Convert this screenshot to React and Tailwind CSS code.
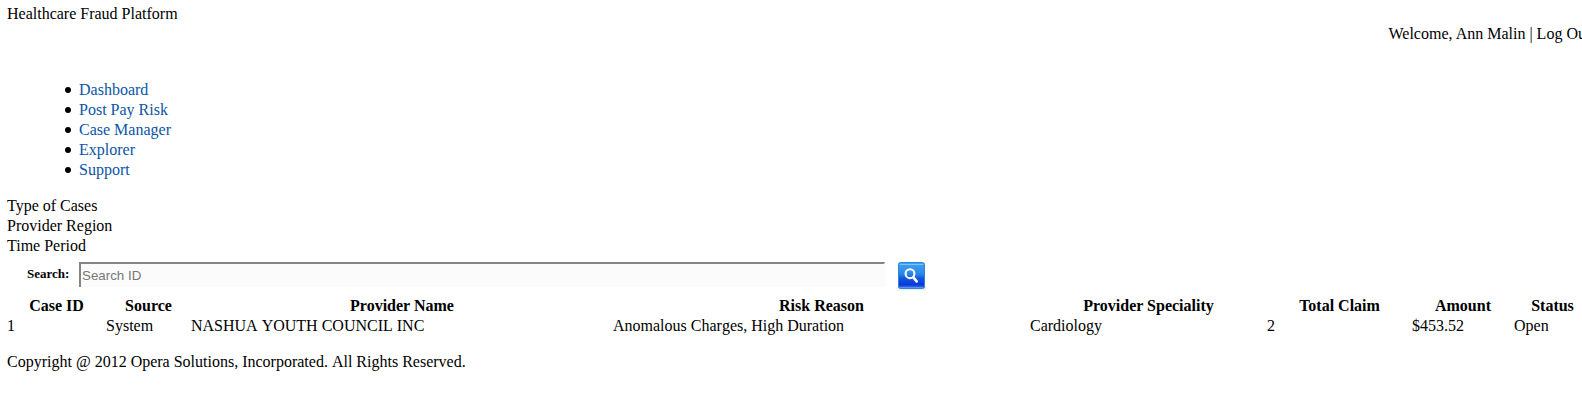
const links = ["Dashboard", "Post Pay Risk", "Case Manager", "Explorer", "Support"];
const filters = ["Type of Cases", "Provider Region", "Time Period"];
const columns = [
  "Case ID",
  "Source",
  "Provider Name",
  "Risk Reason",
  "Provider Speciality",
  "Total Claim",
  "Amount",
  "Status",
];
const cases = [
  ["1", "System", "NASHUA YOUTH COUNCIL INC", "Anomalous Charges, High Duration", "Cardiology", "2", "$453.52", "Open"],
];
const grid = "grid grid-cols-[99px_85px_422px_417px_237px_145px_102px_77px]";

function SearchIcon() {
  return (
    <svg width="31" height="30" viewBox="0 0 31 30" className="block">
      <defs>
        <linearGradient id="face" x1="0" y1="0" x2="0" y2="1">
          <stop offset="0" stopColor="#3fa4f2" />
          <stop offset="0.45" stopColor="#2a86ea" />
          <stop offset="0.6" stopColor="#1258dd" />
          <stop offset="0.85" stopColor="#0b36dc" />
          <stop offset="1" stopColor="#3f80e8" />
        </linearGradient>
      </defs>
      <rect x="0.5" y="24" width="30" height="4.5" rx="2" fill="#ededed" />
      <rect x="2.5" y="0.5" width="26" height="26" rx="2" fill="url(#face)" stroke="#2f83d6" />
      <path d="M4 2.5H27" stroke="#7cc4f8" />
      <path d="M4 25.5H27" stroke="#5595ec" />
      <circle cx="14" cy="11.7" r="4.4" fill="none" stroke="#fff" strokeWidth="2.1" />
      <path d="M17.3 15.4L20.7 19.4" stroke="#fff" strokeWidth="2.6" strokeLinecap="round" />
    </svg>
  );
}

export default function App() {
  return (
    <div className="h-[411px] w-full overflow-hidden bg-white pl-[7px] pt-1 font-['Liberation_Serif',serif] text-base leading-5 text-black">
      <div>Healthcare Fraud Platform</div>
      <div className="ml-[1381.5px] whitespace-nowrap">Welcome, Ann Malin | Log Out</div>
      <ul className="mt-9 pl-[58px]">
        {links.map((label) => (
          <li key={label} className="flex items-center gap-2">
            <span className="size-1.5 rounded-full bg-black" />
            <a href="#" className="text-[#0b55a4]">{label}</a>
          </li>
        ))}
      </ul>
      <div className="mt-4">
        {filters.map((label) => (
          <div key={label}>{label}</div>
        ))}
      </div>
      <div className="mt-[6px] flex h-[30px] items-start">
        <label htmlFor="search" className="ml-5 w-[52px] pt-[2px] text-[13px] font-bold">Search:</label>
        <input
          id="search"
          placeholder="Search ID"
          className="h-[25px] w-[806px] border-l-2 border-r border-t-2 border-l-[#858585] border-r-[#fbfbfb] border-t-[#858585] bg-[#fbfbfb] pl-px font-['Liberation_Sans',sans-serif] text-[13.33px] outline-none placeholder:text-[#777777]"
        />
        <button className="ml-[11px]" aria-label="Search">
          <SearchIcon />
        </button>
      </div>
      <div className={`${grid} mt-[4px] whitespace-nowrap text-center font-bold`}>
        {columns.map((name) => (
          <div key={name}>{name}</div>
        ))}
      </div>
      {cases.map((row) => (
        <div key={row[0]} className={`${grid} whitespace-nowrap [font-kerning:none]`}>
          {row.map((value, i) => (
            <div key={columns[i]}>{value}</div>
          ))}
        </div>
      ))}
      <div className="mt-4 [font-kerning:none]">Copyright @ 2012 Opera Solutions, Incorporated. All Rights Reserved.</div>
    </div>
  );
}
